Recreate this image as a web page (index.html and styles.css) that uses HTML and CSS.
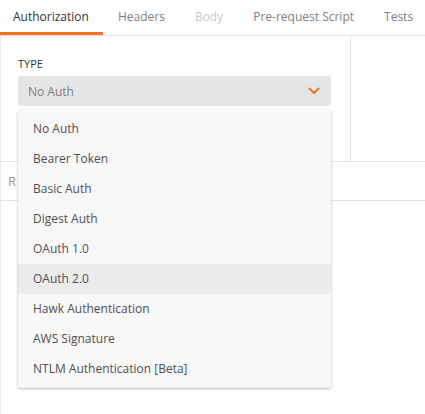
FILE: index.html
```html
<!DOCTYPE html>
<html>
<head>
<meta charset="utf-8">
<link rel="stylesheet" href="styles.css">
</head>
<body>
<div class="page">
  <div class="tabs">
    <div class="tab active">Authorization</div>
    <div class="tab">Headers</div>
    <div class="tab disabled">Body</div>
    <div class="tab">Pre-request Script</div>
    <div class="tab">Tests</div>
  </div>
  <div class="main">
    <div class="auth-pane">
      <div class="label">TYPE</div>
      <div class="select">
        <span class="select-text">No Auth</span>
        <svg class="chevron" width="12" height="8" viewBox="0 0 12 8"><path d="M1.5 1.5 L6 6 L10.5 1.5" fill="none" stroke="#f47023" stroke-width="2" stroke-linecap="round" stroke-linejoin="round"/></svg>
      </div>
      <div class="menu">
        <div class="item">No Auth</div>
        <div class="item">Bearer Token</div>
        <div class="item">Basic Auth</div>
        <div class="item">Digest Auth</div>
        <div class="item">OAuth 1.0</div>
        <div class="item hover">OAuth 2.0</div>
        <div class="item">Hawk Authentication</div>
        <div class="item">AWS Signature</div>
        <div class="item">NTLM Authentication [Beta]</div>
      </div>
    </div>
    <div class="side-pane"></div>
  </div>
  <div class="response">R</div>
  <div class="rest"></div>
</div>
</body>
</html>
```
FILE: styles.css
```css
html, body {
  margin: 0;
  padding: 0;
  background: #ffffff;
}
body {
  font-family: "Open Sans", "Noto Sans", sans-serif;
  font-size: 12px;
  color: #505050;
}
.page {
  width: 425px;
  height: 414px;
  overflow: hidden;
  position: relative;
}
.tabs {
  display: flex;
  border-bottom: 1px solid #e2e2e2;
  box-sizing: border-box;
  height: 36px;
}
.tab {
  padding: 0 15px;
  line-height: 33px;
  font-size: 12px;
  color: #808080;
  border-bottom: 3px solid transparent;
  height: 32px;
  white-space: nowrap;
}
.tab.active {
  color: #333333;
  border-bottom-color: #f47023;
  padding-left: 13px;
  padding-right: 14px;
}
.tab.disabled {
  color: #c8c8c8;
}
.main {
  display: flex;
  height: 126px;
  border-bottom: 1px solid #e2e2e2;
  box-sizing: border-box;
  border-left: 1px solid #ececec;
}
.auth-pane {
  width: 350px;
  border-right: 1px solid #e2e2e2;
  padding: 21px 0 0 17px;
  box-sizing: border-box;
  position: relative;
}
.label {
  font-size: 11px;
  color: #333333;
  line-height: 14px;
  margin-bottom: 5px;
}
.select {
  width: 313px;
  height: 30px;
  background: #e5e5e5;
  border-radius: 3px;
  display: flex;
  align-items: center;
  justify-content: space-between;
  padding: 0 11px 0 10px;
  box-sizing: border-box;
}
.select-text {
  color: #808080;
  font-size: 12px;
}
.chevron {
  display: block;
}
.menu {
  position: absolute;
  left: 17px;
  top: 74px;
  width: 313px;
  padding: 4px 0;
  background: #f8f8f8;
  border-radius: 3px;
  box-shadow: 0 1px 3px rgba(0,0,0,0.28);
  z-index: 5;
}
.item {
  height: 30px;
  line-height: 30px;
  padding-left: 15px;
  font-size: 12px;
  color: #505050;
}
.item.hover {
  background: #ececec;
}
.side-pane {
  flex: 1;
}
.response {
  height: 39px;
  border-bottom: 1px solid #e2e2e2;
  border-left: 1px solid #ececec;
  box-sizing: border-box;
  padding-left: 7px;
  line-height: 38px;
  font-size: 13px;
  color: #999999;
}
.rest {
  height: 214px;
  border-left: 1px solid #ececec;
}
```
